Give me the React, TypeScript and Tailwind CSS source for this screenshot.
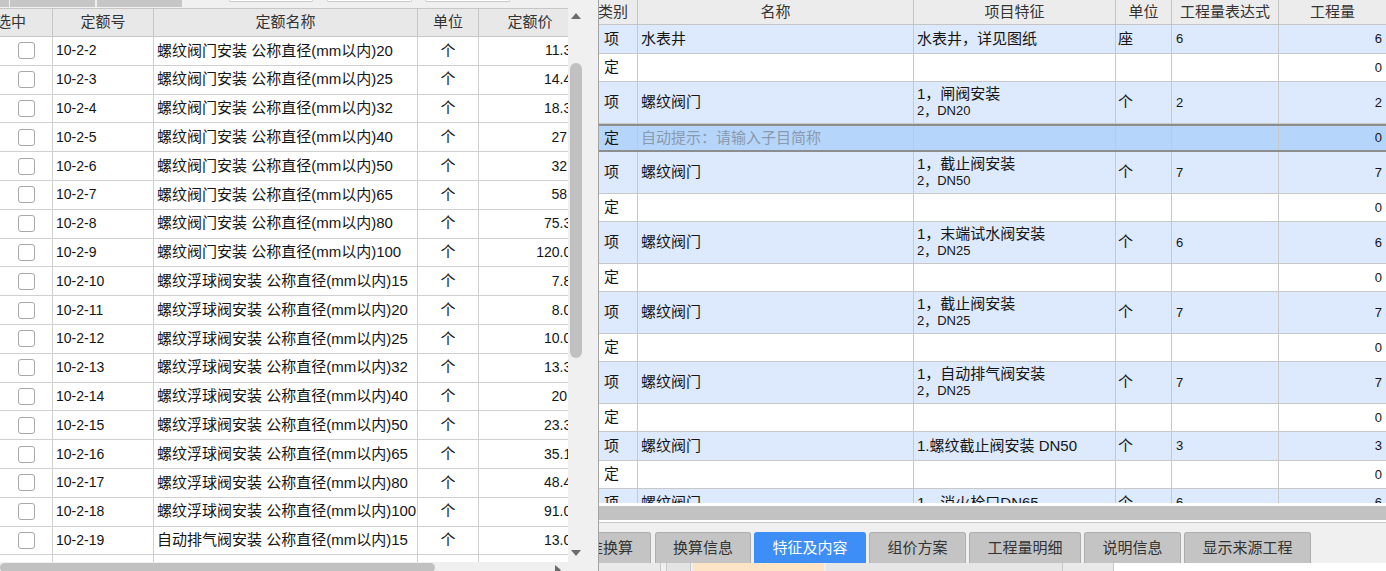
import React from 'react';

// left: quota library list, right: bill items with the property tabs
const quotaRows: [string, string, string][] = [
  ['10-2-2', '螺纹阀门安装 公称直径(mm以内)20', '11.32'],
  ['10-2-3', '螺纹阀门安装 公称直径(mm以内)25', '14.46'],
  ['10-2-4', '螺纹阀门安装 公称直径(mm以内)32', '18.32'],
  ['10-2-5', '螺纹阀门安装 公称直径(mm以内)40', '27'],
  ['10-2-6', '螺纹阀门安装 公称直径(mm以内)50', '32'],
  ['10-2-7', '螺纹阀门安装 公称直径(mm以内)65', '58'],
  ['10-2-8', '螺纹阀门安装 公称直径(mm以内)80', '75.32'],
  ['10-2-9', '螺纹阀门安装 公称直径(mm以内)100', '120.06'],
  ['10-2-10', '螺纹浮球阀安装 公称直径(mm以内)15', '7.82'],
  ['10-2-11', '螺纹浮球阀安装 公称直径(mm以内)20', '8.06'],
  ['10-2-12', '螺纹浮球阀安装 公称直径(mm以内)25', '10.06'],
  ['10-2-13', '螺纹浮球阀安装 公称直径(mm以内)32', '13.32'],
  ['10-2-14', '螺纹浮球阀安装 公称直径(mm以内)40', '20'],
  ['10-2-15', '螺纹浮球阀安装 公称直径(mm以内)50', '23.32'],
  ['10-2-16', '螺纹浮球阀安装 公称直径(mm以内)65', '35.16'],
  ['10-2-17', '螺纹浮球阀安装 公称直径(mm以内)80', '48.46'],
  ['10-2-18', '螺纹浮球阀安装 公称直径(mm以内)100', '91.06'],
  ['10-2-19', '自动排气阀安装 公称直径(mm以内)15', '13.06'],
];

type BillRow = {
  kind: '项' | '定';
  name?: string;
  feat?: string[];
  unit?: string;
  expr?: string;
  qty: string;
  tall?: boolean;
  selected?: boolean;
  hint?: string;
};

const billRows: BillRow[] = [
  { kind: '项', name: '水表井', feat: ['水表井，详见图纸'], unit: '座', expr: '6', qty: '6' },
  { kind: '定', qty: '0' },
  { kind: '项', name: '螺纹阀门', feat: ['1，闸阀安装', '2，DN20'], unit: '个', expr: '2', qty: '2', tall: true },
  { kind: '定', qty: '0', selected: true, hint: '自动提示：请输入子目简称' },
  { kind: '项', name: '螺纹阀门', feat: ['1，截止阀安装', '2，DN50'], unit: '个', expr: '7', qty: '7', tall: true },
  { kind: '定', qty: '0' },
  { kind: '项', name: '螺纹阀门', feat: ['1，末端试水阀安装', '2，DN25'], unit: '个', expr: '6', qty: '6', tall: true },
  { kind: '定', qty: '0' },
  { kind: '项', name: '螺纹阀门', feat: ['1，截止阀安装', '2，DN25'], unit: '个', expr: '7', qty: '7', tall: true },
  { kind: '定', qty: '0' },
  { kind: '项', name: '螺纹阀门', feat: ['1，自动排气阀安装', '2，DN25'], unit: '个', expr: '7', qty: '7', tall: true },
  { kind: '定', qty: '0' },
  { kind: '项', name: '螺纹阀门', feat: ['1.螺纹截止阀安装 DN50'], unit: '个', expr: '3', qty: '3' },
  { kind: '定', qty: '0' },
  { kind: '项', name: '螺纹阀门', feat: ['1、消火栓口DN65'], unit: '个', expr: '6', qty: '6' },
];

const tabs: [string, string][] = [
  ['标准换算', 'w-[96px] -ml-[44px]'],
  ['换算信息', 'w-[96px] ml-px'],
  ['特征及内容', 'w-[112px]'],
  ['组价方案', 'w-[97px]'],
  ['工程量明细', 'w-[112px]'],
  ['说明信息', 'w-[97px]'],
  ['显示来源工程', 'w-[127px]'],
];

function Arrow({ dir }: { dir: 'up' | 'down' | 'right' }) {
  const pts = dir === 'up' ? '0,6 5,0 10,6' : dir === 'down' ? '0,0 10,0 5,6' : '0,0 6,5 0,10';
  const [w, h] = dir === 'right' ? [6, 10] : [10, 6];
  return (
    <svg width={w} height={h} viewBox={`0 0 ${w} ${h}`}>
      <polygon points={pts} fill="#6b6b6b" />
    </svg>
  );
}

function QuotaPanel() {
  const cols = 'grid grid-cols-[53px_101px_264px_61px_102px]';
  return (
    <div className="flex w-[583px] shrink-0 flex-col">
      <div className="flex h-[8px] items-start">
        <div className="h-[7px] w-[9px] bg-[#c6c6c6]" />
        <div className="ml-px h-[7px] w-[85px] bg-[#c6c6c6]" />
        <div className="ml-[2px] h-[7px] w-[85px] bg-[#c6c6c6]" />
        <div className="ml-[47px] h-[2px] w-[84px] rounded-b-[2px] border-x border-b border-[#c9c9c9] bg-white" />
        <div className="ml-[14px] h-[2px] w-[85px] rounded-b-[2px] border-x border-b border-[#c9c9c9] bg-white" />
        <div className="ml-[13px] h-[2px] w-[85px] rounded-b-[2px] border-x border-b border-[#c9c9c9] bg-white" />
      </div>
      <div className="flex h-[554px]">
        <div className="w-[568px] overflow-hidden bg-white">
          <div className="w-[581px]">
            <div className={`${cols} h-[29px] border-y border-[#c6c6c6] bg-[#e8e8e8] text-[15px] text-[#333]`}>
              <div className="flex items-center overflow-hidden border-r border-[#c6c6c6]">
                <span className="-ml-[4px]">选中</span>
              </div>
              <div className="flex items-center justify-center border-r border-[#c6c6c6]">定额号</div>
              <div className="flex items-center justify-center border-r border-[#c6c6c6]">定额名称</div>
              <div className="flex items-center justify-center border-r border-[#c6c6c6]">单位</div>
              <div className="flex items-center justify-center">定额价</div>
            </div>
            {quotaRows.map(([code, name, price]) => (
              <div key={code} className={`${cols} h-[28.8px] border-b border-[#d0d0d0] text-[15px]`}>
                <div className="flex items-center justify-center border-r border-[#d0d0d0]">
                  <div className="size-[17px] rounded-[3px] border border-[#a8a8a8] bg-white" />
                </div>
                <div className="flex items-center border-r border-[#d0d0d0] pl-[3px] text-[14px]">{code}</div>
                <div className="flex items-center whitespace-nowrap border-r border-[#d0d0d0] pl-[3px]">{name}</div>
                <div className="flex items-center justify-center border-r border-[#d0d0d0]">个</div>
                <div className={`flex items-center justify-end text-[14px] ${price.includes('.') ? 'pr-[2px]' : 'pr-[14px]'}`}>
                  {price}
                </div>
              </div>
            ))}
            <div className={`${cols} h-[28.8px] border-b border-[#d0d0d0]`}>
              <div className="border-r border-[#d0d0d0]" />
              <div className="border-r border-[#d0d0d0]" />
              <div className="border-r border-[#d0d0d0]" />
              <div className="border-r border-[#d0d0d0]" />
              <div />
            </div>
          </div>
        </div>
        <div className="flex w-[15px] flex-col items-center bg-[#f0f0f0]">
          <div className="flex h-[16px] items-center">
            <Arrow dir="up" />
          </div>
          <div className="mt-[39px] h-[295px] w-[12px] rounded-[6px] bg-[#c1c1c1]" />
          <div className="mt-auto flex h-[18px] items-center">
            <Arrow dir="down" />
          </div>
        </div>
      </div>
      <div className="flex h-[9px] items-start bg-[#f0f0f0]">
        <div className="mt-px h-[9px] w-[435px] rounded-[5px] bg-[#c1c1c1]" />
        <div className="ml-auto mr-[22px] mt-[3px]">
          <Arrow dir="right" />
        </div>
      </div>
    </div>
  );
}

function BillPanel() {
  const cols = 'grid grid-cols-[39px_276px_202px_56px_107px_107px]';
  return (
    <div className="flex w-[788px] shrink-0 flex-col border-l border-[#a3a3a3]">
      <div className="h-[503px] overflow-hidden bg-white">
        <div className={`${cols} h-[25px] border-b border-[#c4c4c4] bg-[#ececec] text-[15px] text-[#333]`}>
          <div className="-ml-px flex items-center border-r border-[#c4c4c4]">类别</div>
          <div className="flex items-center justify-center border-r border-[#c4c4c4]">名称</div>
          <div className="flex items-center justify-center border-r border-[#c4c4c4]">项目特征</div>
          <div className="flex items-center justify-center border-r border-[#c4c4c4]">单位</div>
          <div className="flex items-center justify-center border-r border-[#c4c4c4]">工程量表达式</div>
          <div className="flex items-center justify-center">工程量</div>
        </div>
        {billRows.map((r, i) => {
          const bg = r.selected ? 'bg-[#b5d5fb]' : r.kind === '项' ? 'bg-[#dde9fc]' : 'bg-white';
          const h = r.tall ? 'h-[41.5px]' : 'h-[28.5px]';
          const edge = r.selected
            ? 'border-y-2 border-[#8d8d8d]'
            : 'border-b border-[#c8c8c8]';
          return (
            <div key={i} className={`${cols} ${h} ${bg} ${edge} text-[15px]`}>
              <div className="flex items-center border-r border-[#c8c8c8] pl-[5px]">{r.kind}</div>
              <div className="flex items-center whitespace-nowrap border-r border-[#c8c8c8] pl-[3px]">
                {r.hint ? <span className="text-[#8b99ac]">{r.hint}</span> : r.name}
              </div>
              <div className="flex flex-col justify-center whitespace-nowrap border-r border-[#c8c8c8] pl-[3px] leading-[17px]">
                {r.feat?.map((f, k) => (
                  <span key={k} className={k === 1 ? 'text-[13px]' : ''}>
                    {f}
                  </span>
                ))}
              </div>
              <div className="flex items-center border-r border-[#c8c8c8] pl-[2px]">{r.unit}</div>
              <div className="flex items-center border-r border-[#c8c8c8] pl-[4px] text-[13px]">{r.expr}</div>
              <div className="flex items-center justify-end pr-[4px] text-[13px]">{r.qty}</div>
            </div>
          );
        })}
      </div>
      <div className="h-[3px] bg-white" />
      <div className="h-[14px] bg-[#c2c2c2]" />
      <div className="h-[3px] border-b border-[#c8c8c8] bg-white" />
      <div className="h-[9px] bg-[#f0f0f0]" />
      <div className="flex h-[31px] gap-[3px] overflow-hidden bg-[#f0f0f0]">
        {tabs.map(([t, size]) => (
          <div
            key={t}
            className={`flex shrink-0 items-center justify-center whitespace-nowrap rounded-t-[3px] border border-b-0 text-[15px] ${size} ${
              t === '特征及内容'
                ? 'border-[#3d8ef7] bg-[#3d8ef7] text-white'
                : 'border-[#adadad] bg-[#c4c4c4] text-[#333]'
            }`}
          >
            {t}
          </div>
        ))}
      </div>
      <div className="flex h-[8px] bg-[#f0f0f0]">
        <div className="w-[62px] border-r border-[#c8c8c8] bg-[#e9e9e9]" />
        <div className="ml-[5px] w-[25px] border-x border-[#c8c8c8] bg-[#e4e4e4]" />
        <div className="ml-[2px] w-[131px] bg-[#fde4c6]" />
        <div className="ml-[2px] w-[237px] border-r border-[#c8c8c8] bg-[#e6e6e6]" />
        <div className="w-[51px] border-r border-[#c8c8c8] bg-[#e9e9e9]" />
        <div className="flex-1 bg-white" />
      </div>
    </div>
  );
}

export default function App() {
  return (
    <div className="flex h-[571px] w-[1386px] overflow-hidden bg-[#f0f0f0] text-[#151515] [font-family:'Liberation_Sans','Noto_Sans_CJK_SC',sans-serif]">
      <QuotaPanel />
      <div className="w-[15px] shrink-0 bg-[#f0f0f0]" />
      <BillPanel />
    </div>
  );
}
